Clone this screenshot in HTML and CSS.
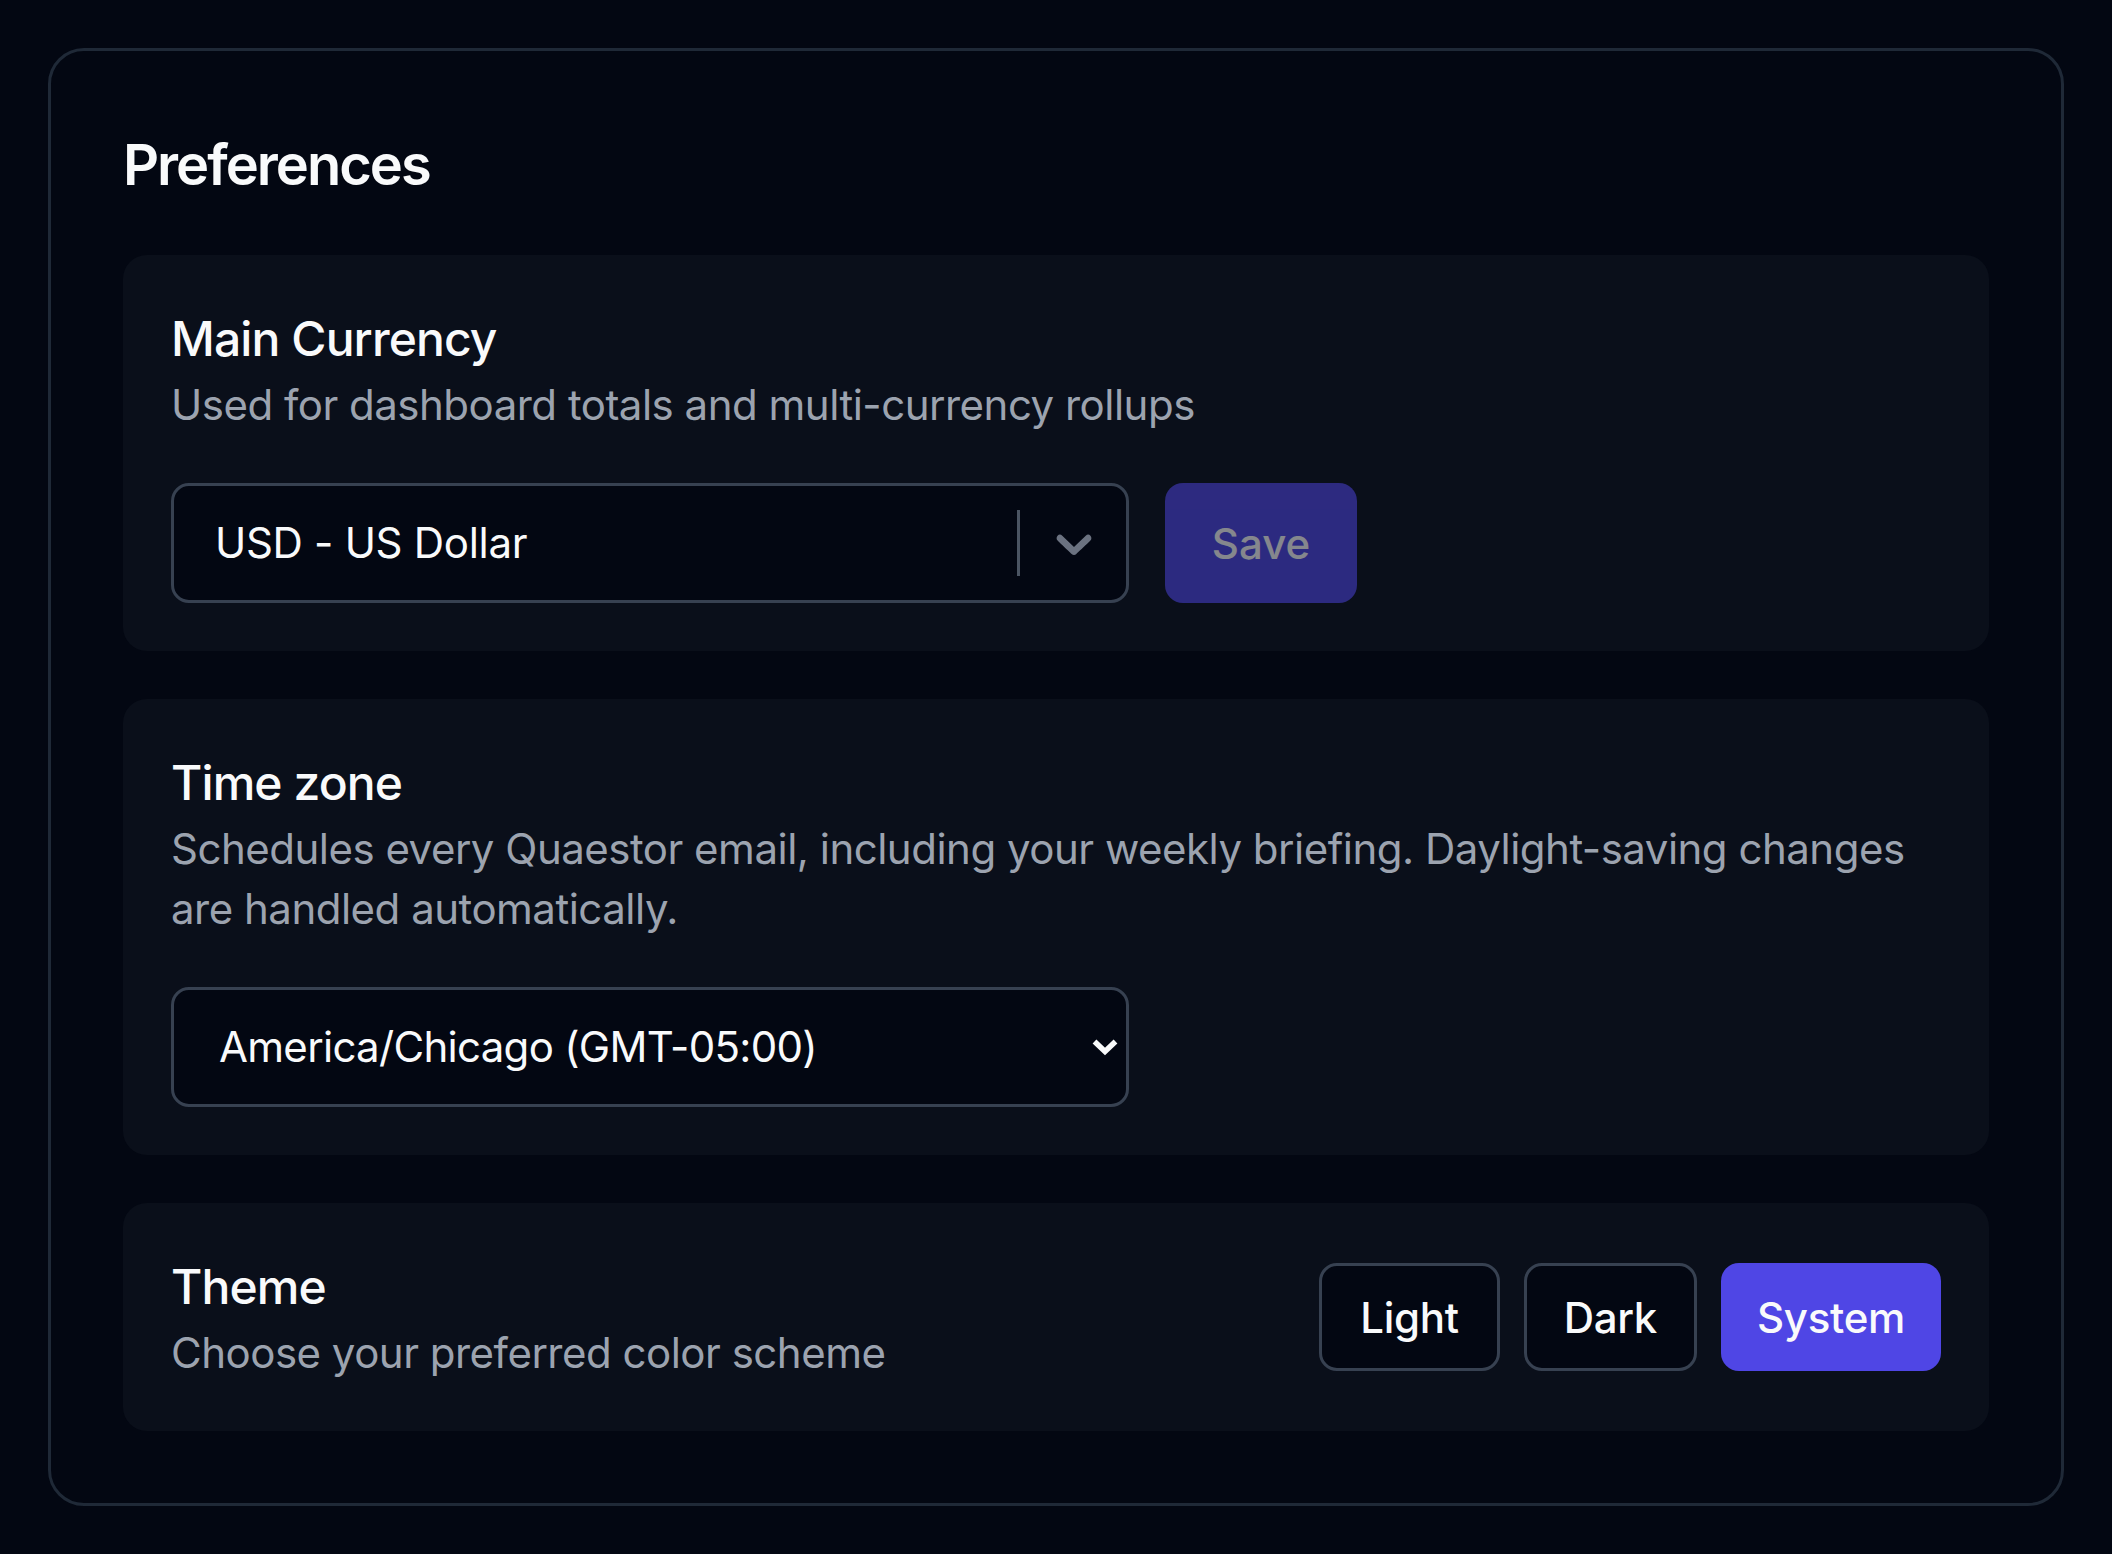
FILE: index.html
```html
<!DOCTYPE html>
<html lang="en">
<head>
<meta charset="utf-8">
<title>Preferences</title>
<link rel="stylesheet" href="styles.css">
</head>
<body>
<div class="card">
  <h2 class="heading">Preferences</h2>
  <div class="sections">
    <section class="panel">
      <h3 class="title">Main Currency</h3>
      <p class="desc">Used for dashboard totals and multi-currency rollups</p>
      <div class="row">
        <div class="field field-react">
          <span class="value value-react">USD - US Dollar</span>
          <span class="indicators">
            <span class="sep"></span>
            <span class="ind">
              <svg width="60" height="60" viewBox="0 0 20 20" aria-hidden="true"><path fill="#6b7280" d="M4.516 7.548c0.436-0.446 1.043-0.481 1.576 0l3.908 3.747 3.908-3.747c0.533-0.481 1.141-0.446 1.574 0 0.436 0.445 0.408 1.197 0 1.615-0.406 0.418-4.695 4.502-4.695 4.502-0.217 0.223-0.502 0.335-0.787 0.335s-0.57-0.112-0.789-0.335c0 0-4.287-4.084-4.695-4.502s-0.436-1.17 0-1.615z"/></svg>
            </span>
          </span>
        </div>
        <button class="btn-save" type="button" disabled>Save</button>
      </div>
    </section>
    <section class="panel">
      <h3 class="title">Time zone</h3>
      <p class="desc">Schedules every Quaestor email, including your weekly briefing. Daylight-saving changes are handled automatically.</p>
      <div class="row">
        <div class="field field-native">
          <span class="value value-native">America/Chicago (GMT-05:00)</span>
          <svg class="chev" width="28" height="18" viewBox="0 0 28 18" aria-hidden="true"><polyline points="3.5,3.5 14,13.5 24.5,3.5" fill="none" stroke="#f9fafb" stroke-width="5.5" stroke-linejoin="miter"/></svg>
        </div>
      </div>
    </section>
    <section class="panel panel-theme">
      <div class="theme-text">
        <h3 class="title">Theme</h3>
        <p class="desc">Choose your preferred color scheme</p>
      </div>
      <div class="seg">
        <button class="opt" type="button">Light</button>
        <button class="opt opt-dark" type="button">Dark</button>
        <button class="opt opt-active" type="button">System</button>
      </div>
    </section>
  </div>
</div>
</body>
</html>
```
FILE: styles.css
```css
* { box-sizing: border-box; }
html, body { margin: 0; }
body {
  padding: 48px;
  background: #030712;
  font-family: Inter, "Noto Sans", sans-serif;
  color: #f9fafb;
}
.card {
  border: 3px solid #1f2937;
  border-radius: 36px;
  padding: 72px;
  background: #030712;
}
.heading {
  margin: 0 0 48px;
  font-size: 56px;
  line-height: 84px;
  font-weight: 600;
  letter-spacing: -2px;
  color: #f9fafb;
}
.sections {
  display: flex;
  flex-direction: column;
  gap: 48px;
}
.panel {
  background: #0a0f1a;
  border-radius: 24px;
  padding: 48px;
}
.title {
  margin: 0;
  font-size: 48px;
  line-height: 72px;
  font-weight: 500;
  letter-spacing: -0.9px;
  color: #f9fafb;
}
.desc {
  margin: 0;
  font-size: 42px;
  line-height: 60px;
  font-weight: 400;
  letter-spacing: -0.5px;
  color: #9ca3af;
}
.row {
  display: flex;
  gap: 36px;
  margin-top: 48px;
}
.field {
  width: 958px;
  height: 120px;
  border: 3px solid #374151;
  border-radius: 18px;
  background: #030712;
  display: flex;
  align-items: center;
}
.value {
  flex: 1;
  font-size: 42px;
  line-height: 60px;
  color: #f9fafb;
  white-space: nowrap;
}
.value-react { padding-left: 41px; letter-spacing: -0.3px; }
.value-native { padding-left: 45px; letter-spacing: -0.7px; }
.indicators {
  display: flex;
  align-items: center;
  height: 100%;
}
.sep {
  width: 3px;
  height: 66px;
  background: #4b5563;
}
.ind {
  display: flex;
  padding: 0 22px 0 24px;
}
.chev { margin-right: 7px; }
.btn-save {
  width: 192px;
  height: 120px;
  border: 0;
  border-radius: 18px;
  background: #4f46e5;
  color: #ffffff;
  opacity: 0.5;
  font-family: inherit;
  font-size: 42px;
  font-weight: 500;
}
.panel-theme {
  display: flex;
  justify-content: space-between;
  align-items: center;
}
.seg {
  display: flex;
  gap: 24px;
}
.opt {
  height: 108px;
  padding: 0 38px;
  border: 3px solid #374151;
  border-radius: 18px;
  background: #030712;
  color: #f9fafb;
  font-family: inherit;
  font-size: 42px;
  font-weight: 500;
  letter-spacing: -0.3px;
}
.opt-dark { padding: 0 37px; }
.opt-active {
  padding: 0 36px;
  border: 0;
  background: #4f46e5;
}
```
